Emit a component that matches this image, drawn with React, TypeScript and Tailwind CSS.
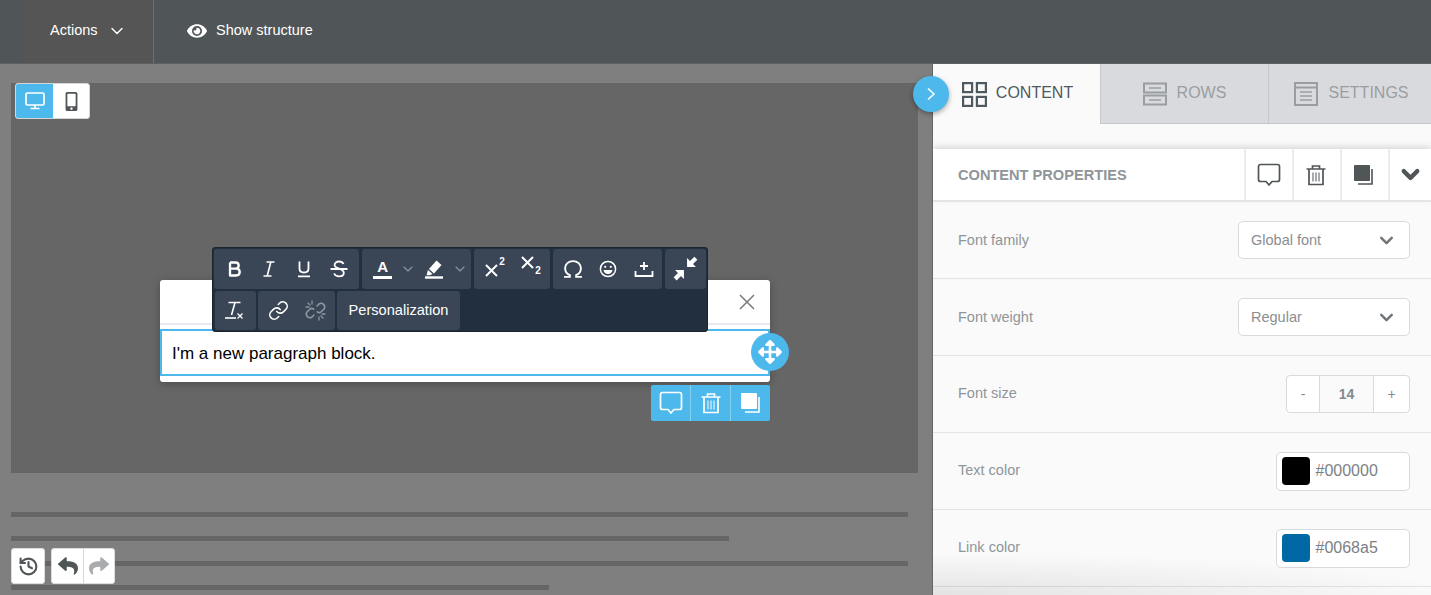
import React from "react";
import { FaEye, FaMobileAlt, FaReply, FaShare, FaArrowsAlt } from "react-icons/fa";
import { History, ChevronDown, Link } from "lucide-react";

const Comment = ({ c = "currentColor", s = 24 }: { c?: string; s?: number }) => (
  <svg width={s} height={s} viewBox="0 0 24 24" fill="none" stroke={c} strokeWidth="1.7" strokeLinejoin="round">
    <path d="M3.5 1.5h17a2 2 0 0 1 2 2v13a2 2 0 0 1-2 2h-5.5l-3 3.5-3-3.5H3.5a2 2 0 0 1-2-2v-13a2 2 0 0 1 2-2z" />
  </svg>
);
const Trash = ({ c = "currentColor", s = 22 }: { c?: string; s?: number }) => (
  <svg width={s} height={s} viewBox="0 0 22 22" fill="none" stroke={c} strokeWidth="1.7">
    <path d="M1.5 5h19M7.5 5V2h7v3M4 5v15.5h14V5" />
    <path d="M8 8.5v9M11 8.5v9M14 8.5v9" strokeWidth="1" />
  </svg>
);
const Duplicate = ({ c = "currentColor", s = 20 }: { c?: string; s?: number }) => (
  <svg width={s} height={s} viewBox="0 0 20 20" fill="none">
    <rect x="0" y="0" width="16" height="16" rx="1" fill={c} />
    <path d="M18 4v15H4" stroke={c} strokeWidth="1.6" />
  </svg>
);
const Pen = () => (
  <svg width="20" height="20" viewBox="0 0 20 20" fill="#fff">
    <path d="M12.5 1.5l5 4.5-7.5 8.5-5-4.5z" />
    <path d="M4 11l4.5 4-2.5 1.2H2.5z" />
    <rect x="1" y="17.3" width="18" height="2.4" />
  </svg>
);

function Sel({ label, low }: { label: string; low?: boolean }) {
  return (
    <div className="w-[172px] h-[38px] bg-white border-[1.5px] border-[#d8dadc] rounded-[5px] flex items-center justify-between pl-[12px] pr-[12px] text-[#8a8e92] text-[14.5px]">
      <span className={low ? "mt-[2px]" : ""}>{label}</span>
      <ChevronDown size={21} strokeWidth={2.8} className="text-[#6f7478]" />
    </div>
  );
}
function Row({ label, low, children }: { label: string; low?: boolean; children: React.ReactNode }) {
  return (
    <div className="h-[77px] border-b border-[#e2e3e4] flex items-center justify-between pl-[25px] pr-[21px]">
      <span className={`text-[14.5px] text-[#8f9599] ${low ? "mt-[2px]" : ""}`}>{label}</span>
      {children}
    </div>
  );
}
function ColorBox({ color, hex }: { color: string; hex: string }) {
  return (
    <div className="w-[134px] h-[39px] bg-white border-[1.5px] border-[#d8dadc] rounded-[5px] flex items-center pl-[4.5px] text-[#7d8185] text-[16px]">
      <span className="w-[28px] h-[28px] rounded-[4px] mr-[6px]" style={{ background: color }} />
      {hex}
    </div>
  );
}
function TabItem({ active, label, icon, w }: { active?: boolean; label: string; icon: React.ReactNode; w: string }) {
  return (
    <div className={`${w} h-full flex items-center justify-center text-[16px] ${active ? "bg-[#fafafa] text-[#4f5a60] gap-[9px]" : "bg-[#d8dadd] text-[#9a9ea2] gap-[10px] border-b border-l border-[#c6c9cc]"}`}>
      {icon}
      <span className="mb-[2px]">{label}</span>
    </div>
  );
}
const G = ({ w, children }: { w: string; children: React.ReactNode }) => (
  <div className={`${w} h-full bg-[#3a4656] rounded-[3px] flex items-center text-white`}>{children}</div>
);
const B = ({ w = "w-[35px]", children }: { w?: string; children: React.ReactNode }) => (
  <div className={`${w} h-full flex items-center justify-center shrink-0`}>{children}</div>
);
const Caret = () => <ChevronDown size={16} strokeWidth={1.7} className="text-[#8d96a1] shrink-0" />;

const Sup = ({ sub }: { sub?: boolean }) => (
  <span className="flex items-start text-white">
    <svg width="13" height="13" viewBox="0 0 13 13" stroke="#fff" strokeWidth="2" className={sub ? "mt-[-6px]" : "mt-[3px]"}>
      <path d="M1 1l11 11M12 1L1 12" />
    </svg>
    <span className={`text-[10px] font-bold leading-none ${sub ? "mt-[4px]" : "mt-[-4px]"} ml-[1px]`}>2</span>
  </span>
);

function Toolbar() {
  return (
    <div className="absolute left-[201px] top-[164px] w-[496px] h-[85px] bg-[#222f3e] rounded-[3px] border border-[#1b2530] flex flex-col gap-[2px] p-px z-20">
      <div className="h-[41px] flex gap-[3px]">
        <G w="w-[146px]">
          <B w="w-[36px] pl-[6px]">
            <svg width="18" height="18" viewBox="0 0 18 18" fill="none" stroke="#fff" strokeWidth="2.3" strokeLinejoin="round">
              <path d="M4 2.5v13h6c2.2 0 3.7-1.4 3.7-3.5S12.2 8.7 10 8.7H4M4 8.7h5.4c1.9 0 3.3-1.3 3.3-3.1s-1.3-3.1-3.3-3.1H4" />
            </svg>
          </B>
          <B w="w-[35px] pl-[2px]">
            <svg width="16" height="18" viewBox="0 0 16 18" fill="none" stroke="#fff" strokeWidth="1.6">
              <path d="M5.5 2h8M2.5 16h8M9.8 2L6.2 16" />
            </svg>
          </B>
          <B w="w-[35px] pl-[2px]">
            <svg width="16" height="18" viewBox="0 0 16 18" fill="none" stroke="#fff" strokeWidth="1.8">
              <path d="M3.5 1.5v7c0 2.5 1.8 4 4.5 4s4.5-1.5 4.5-4v-7M2 16.3h12" />
            </svg>
          </B>
          <B w="w-[35px] pl-[2px]">
            <svg width="20" height="18" viewBox="0 0 20 18" fill="none" stroke="#fff" strokeWidth="1.8">
              <path d="M14.5 4c-.7-1.6-2.3-2.5-4.4-2.5-2.6 0-4.5 1.3-4.5 3.4 0 4.3 9.2 3 9.2 7.8 0 2.2-2 3.6-4.7 3.6-2.4 0-4.2-1-5-2.8M1.5 9h17" />
            </svg>
          </B>
        </G>
        <G w="w-[109px]">
          <B w="w-[39px] pl-[2px]">
            <span className="flex flex-col items-center w-[19px] text-[15px] font-bold leading-[15px] text-white">
              A<span className="w-full h-[2.5px] bg-white mt-[2px]" />
            </span>
          </B>
          <div className="w-[14px] flex justify-center"><Caret /></div>
          <B w="w-[38px]"><Pen /></B>
          <div className="w-[14px] flex justify-center"><Caret /></div>
        </G>
        <G w="w-[76px]">
          <B w="w-[39px] pl-[4px]"><Sup /></B>
          <B w="w-[37px]"><Sup sub /></B>
        </G>
        <G w="w-[110px]">
          <B w="w-[39px] pl-[2px]">
            <svg width="20" height="20" viewBox="0 0 19 18" fill="none" stroke="#fff" strokeWidth="1.8">
              <path d="M1 16.5h5.5v-1.6C3.6 13.6 2 11 2 8.3 2 4.3 5.2 1.5 9.5 1.5S17 4.3 17 8.3c0 2.7-1.6 5.3-4.5 6.6v1.6H18" />
            </svg>
          </B>
          <B w="w-[35px] pr-[2px]">
            <svg width="18" height="18" viewBox="0 0 18 18" fill="none" stroke="#fff" strokeWidth="1.5">
              <circle cx="9" cy="9" r="7.6" />
              <circle cx="6.2" cy="6.8" r="1.1" fill="#fff" stroke="none" />
              <circle cx="11.8" cy="6.8" r="1.1" fill="#fff" stroke="none" />
              <path d="M4.5 10h9c-.3 2.6-2.1 4-4.5 4s-4.2-1.4-4.5-4z" fill="#fff" stroke="none" />
            </svg>
          </B>
          <B w="w-[35px]">
            <svg width="20" height="18" viewBox="0 0 20 18" fill="none" stroke="#fff" strokeWidth="1.8">
              <path d="M10 2v8M6 6h8M1.5 11v5h17v-5" />
            </svg>
          </B>
        </G>
        <G w="w-[41px]">
          <B w="w-[41px]">
            <svg width="25" height="25" viewBox="0 0 24 24" fill="#fff">
              <path d="M13.5 10.5V2l2.8 2.8L20.5 .6l2.9 2.9-4.2 4.2 2.8 2.8z" />
              <path d="M10.5 13.5V22l-2.8-2.8-4.2 4.2-2.9-2.9 4.2-4.2L2 13.5z" />
            </svg>
          </B>
        </G>
      </div>
      <div className="h-[40px] flex gap-[2px] pl-px">
        <G w="w-[41px]">
          <B w="w-[41px] pr-[3px]">
            <svg width="20" height="20" viewBox="0 0 20 20" fill="none" stroke="#fff">
              <path d="M4.5 2.5h12M11 2.5L7.5 15" strokeWidth="1.6" />
              <path d="M1 18h11" strokeWidth="1.6" />
              <path d="M13.5 13.5l5 5M18.5 13.5l-5 5" strokeWidth="1.3" />
            </svg>
          </B>
        </G>
        <G w="w-[77px]">
          <B w="w-[40px]"><Link size={21} strokeWidth={1.8} className="text-white" /></B>
          <B w="w-[35px] pr-[1px]">
            <svg width="21" height="21" viewBox="0 0 21 21" fill="none" stroke="#8d96a1" strokeWidth="1.6" strokeLinecap="round">
              <path d="M12 6l2-2a3.6 3.6 0 0 1 5 5l-2.5 2.5c-1.2 1.2-3 1.3-4.2.3" />
              <path d="M9 15l-2 2a3.6 3.6 0 0 1-5-5l2.5-2.5c1.2-1.2 3-1.3 4.2-.3" />
              <path d="M7 1v3M1 7h3M3 3l2 2M14 20v-3M20 14h-3M18 18l-2-2" strokeWidth="1.3" />
            </svg>
          </B>
        </G>
        <div className="w-[123px] h-full bg-[#3a4656] rounded-[3px] flex items-center justify-center text-white text-[14.6px]">Personalization</div>
      </div>
    </div>
  );
}

export default function App() {
  return (
    <div className="w-[1431px] h-[595px] overflow-hidden flex flex-col font-['Liberation_Sans',Arial,sans-serif] bg-[#7f7f7f]">
      <header className="h-16 shrink-0 bg-[#505558] border-b border-[#5d6062] pl-[22px] flex items-center text-white text-[14.5px]">
        <div className="w-[132px] h-full bg-[#555555] border-r border-[#6c6f71] flex items-center pl-[28px]">
          <span className="mb-[2px]">Actions</span>
          <ChevronDown size={20} strokeWidth={1.7} className="ml-[9px] mb-[2px]" />
        </div>
        <FaEye size={20} className="ml-[33px] mb-[2px]" />
        <span className="ml-[9px] mb-[2px]">Show structure</span>
      </header>
      <div className="flex-1 flex min-h-0">
        <main className="w-[933px] shrink-0 relative border-r border-[#666] pl-[11px] pt-[19px]">
          <div className="relative w-[907px] h-[390px] bg-[#666666]">
            <div className="absolute left-[4px] top-0 w-[75px] h-[36px] rounded-[3px] bg-white flex overflow-hidden border border-[#d5d5d5]">
              <div className="w-[37px] bg-[#4db8ec] flex items-center justify-center">
                <svg width="20" height="18" viewBox="0 0 20 18" fill="none" stroke="#fff" strokeWidth="1.7">
                  <rect x="1" y="1" width="18" height="12" rx="1.5" />
                  <path d="M10 13v3M5.5 16.5h9" />
                </svg>
              </div>
              <div className="flex-1 flex items-center justify-center text-[#505558]"><FaMobileAlt size={19} /></div>
            </div>
            <div className="absolute left-[149px] top-[197px] w-[610px] h-[102px] bg-white rounded-[3px] shadow-[0_2px_8px_rgba(0,0,0,0.25)]">
              <div className="h-[45px] border-b-2 border-[#e6eaee]" />
              <svg className="absolute right-[15px] top-[14px]" width="16" height="16" viewBox="0 0 16 16" stroke="#77797b" strokeWidth="1.5">
                <path d="M1 1l14 14M15 1L1 15" />
              </svg>
              <div className="mt-[4px] h-[47px] border-[2.5px] border-[#4db8ec] pt-[2px] flex items-center pl-[10px] text-[17px] text-black">I'm a new paragraph block.</div>
            </div>
            <Toolbar />
            <div className="absolute left-[740px] top-[250px] w-[38px] h-[38px] rounded-full bg-[#4db8ec] flex items-center justify-center text-white z-20">
              <FaArrowsAlt size={24} />
            </div>
            <div className="absolute left-[640px] top-[302px] w-[119px] h-[36px] rounded-[2px] bg-[#4db8ec] flex text-white z-20">
              <div className="w-[40px] border-r border-[#86d0f2] flex items-center justify-center"><Comment c="#fff" /></div>
              <div className="w-[40px] border-r border-[#86d0f2] flex items-center justify-center"><Trash c="#fff" /></div>
              <div className="flex-1 flex items-center justify-center"><Duplicate c="#fff" /></div>
            </div>
          </div>
          <div className="mt-[39px] h-[5px] w-[897px] bg-[#666666]" />
          <div className="mt-[19px] h-[5px] w-[718px] bg-[#666666]" />
          <div className="mt-[20px] h-[5px] w-[897px] bg-[#666666]" />
          <div className="mt-[19px] h-[5px] w-[538px] bg-[#666666]" />
          <div className="absolute left-[11px] top-[484px] flex gap-[6px]">
            <div className="w-[34px] h-[36px] bg-white rounded-[3px] border border-[#ddd] flex items-center justify-center text-[#505558]">
              <History size={21} strokeWidth={2.4} />
            </div>
            <div className="w-[64px] h-[36px] bg-white rounded-[3px] border border-[#ddd] flex">
              <div className="w-[32px] border-r border-[#d8d8d8] flex items-center justify-center text-[#505558]"><FaReply size={20} /></div>
              <div className="flex-1 flex items-center justify-center text-[#a9acae]"><FaShare size={20} /></div>
            </div>
          </div>
          <div className="absolute left-[913px] top-[12px] w-[36px] h-[36px] rounded-full bg-[#4db8ec] shadow-[0_2px_5px_rgba(0,0,0,0.35)] flex items-center justify-center z-30">
            <svg width="10" height="14" viewBox="0 0 10 14" fill="none" stroke="#fff" strokeWidth="1.6"><path d="M2 1.5L8 7l-6 5.5" /></svg>
          </div>
        </main>
        <aside className="flex-1 relative bg-[#fafafa] flex flex-col min-w-0 overflow-hidden">
          <div className="h-[60px] shrink-0 flex">
            <TabItem active label="CONTENT" w="w-[167px] pl-[2px]" icon={
              <svg width="25" height="25" viewBox="0 0 25 25" fill="none" stroke="#4f5a60" strokeWidth="2.2">
                <rect x="1.1" y="1.1" width="9" height="9" /><rect x="14.9" y="1.1" width="9" height="9" />
                <rect x="1.1" y="14.9" width="9" height="9" /><rect x="14.9" y="14.9" width="9" height="9" />
              </svg>
            } />
            <TabItem label="ROWS" w="w-[168px]" icon={
              <svg width="24" height="24" viewBox="0 0 24 24" fill="none" stroke="#9a9ea2" strokeWidth="2">
                <rect x="1" y="1.5" width="22" height="9" /><rect x="1" y="13.5" width="22" height="9" />
                <path d="M6 6h12M6 18h12" strokeWidth="1.4" />
              </svg>
            } />
            <TabItem label="SETTINGS" w="flex-1 pl-[3px]" icon={
              <svg width="24" height="24" viewBox="0 0 24 24" fill="none" stroke="#9a9ea2" strokeWidth="2">
                <rect x="1" y="1" width="22" height="22" />
                <path d="M1 5.5h22" />
                <path d="M6 10h12M6 14h12M6 18h12" strokeWidth="1.3" />
              </svg>
            } />
          </div>
          <div className="h-[25px] shrink-0" />
          <div className="h-[53px] shrink-0 bg-white border-b-2 border-[#e4e5e6] shadow-[0_-3px_6px_rgba(0,0,0,0.12)] flex items-center pl-[25px] relative">
            <span className="flex-1 text-[14.6px] mt-[2px] font-bold text-[#8f9599]">CONTENT PROPERTIES</span>
            <div className="w-[48px] h-full border-l-2 border-[#ececec] flex items-center justify-center text-[#505558]"><Comment /></div>
            <div className="w-[48px] h-full border-l-2 border-[#ececec] pr-[2px] flex items-center justify-center text-[#505558]"><Trash /></div>
            <div className="w-[48px] h-full border-l-2 border-[#ececec] pr-[2px] flex items-center justify-center text-[#505558]"><Duplicate /></div>
            <div className="w-[43px] h-full border-l-2 border-[#ececec] flex items-center justify-center text-[#505558]"><ChevronDown size={27} strokeWidth={3.8} /></div>
          </div>
          <Row label="Font family" low><Sel label="Global font" low /></Row>
          <Row label="Font weight" low><Sel label="Regular" low /></Row>
          <Row label="Font size">
            <div className="w-[124px] h-[38px] bg-white border-[1.5px] border-[#d8dadc] rounded-[4px] flex text-[#85898d] text-[14px]">
              <div className="w-[32px] flex items-center justify-center">-</div>
              <div className="flex-1 bg-[#fafafa] border-x-[1.5px] border-[#d8dadc] flex items-center justify-center font-bold">14</div>
              <div className="w-[35px] flex items-center justify-center">+</div>
            </div>
          </Row>
          <Row label="Text color"><ColorBox color="#000000" hex="#000000" /></Row>
          <Row label="Link color"><ColorBox color="#0068a5" hex="#0068a5" /></Row>
          <div className="absolute left-0 right-0 bottom-0 h-[40px] bg-[radial-gradient(ellipse_at_bottom_left,rgba(0,0,0,0.09),transparent_75%)] pointer-events-none" />
        </aside>
      </div>
    </div>
  );
}
